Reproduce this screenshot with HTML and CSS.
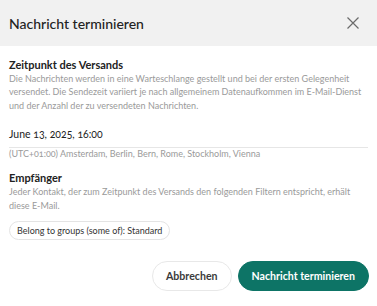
FILE: index.html
```html
<!DOCTYPE html>
<html lang="de">
<head>
    <meta charset="UTF-8">
    <meta name="viewport" content="width=device-width, initial-scale=1.0">
    <title>Nachricht terminieren</title>
    <link rel="stylesheet" href="styles.css">
</head>
<body>
    <div class="dialog">
        <div class="dialog-header">
            <h1>Nachricht terminieren</h1>
            <button class="close-btn" aria-label="Schließen">
                <svg width="12" height="12" viewBox="0 0 12 12">
                    <path d="M0.5 0.5 L11.5 11.5 M11.5 0.5 L0.5 11.5" stroke="#6b6b6b" stroke-width="1.2" fill="none"/>
                </svg>
            </button>
        </div>
        <div class="dialog-body">
            <div class="section">
                <h2>Zeitpunkt des Versands</h2>
                <p class="hint">Die Nachrichten werden in eine Warteschlange gestellt und bei der ersten Gelegenheit versendet. Die Sendezeit variiert je nach allgemeinem Datenaufkommen im E-Mail-Dienst und der Anzahl der zu versendeten Nachrichten.</p>
            </div>
            <div class="date-field">
                <div class="date-value">June 13, 2025, 16:00</div>
                <div class="timezone">(UTC+01:00) Amsterdam, Berlin, Bern, Rome, Stockholm, Vienna</div>
            </div>
            <div class="section">
                <h2>Empfänger</h2>
                <p class="hint">Jeder Kontakt, der zum Zeitpunkt des Versands den folgenden Filtern entspricht, erhält diese E-Mail.</p>
                <div class="chip-list">
                    <span class="chip">Belong to groups (some of): Standard</span>
                </div>
            </div>
        </div>
        <div class="dialog-footer">
            <button class="btn btn-secondary">Abbrechen</button>
            <button class="btn btn-primary">Nachricht terminieren</button>
        </div>
    </div>
</body>
</html>
```

FILE: styles.css
```css
body {
    margin: 0;
    font-family: "Lato", "Open Sans", sans-serif;
    color: #222;
    background: #fff;
}
.dialog {
    width: 377px;
}
.dialog-header {
    display: flex;
    align-items: center;
    justify-content: space-between;
    height: 46px;
    padding: 0 18px 0 9px;
    background-color: #f1f1f1;
}
.dialog-header h1 {
    margin: 0;
    font-size: 14px;
    font-weight: 500;
    color: #222;
}
.close-btn {
    border: 0;
    background: none;
    padding: 0;
    display: flex;
}
.dialog-body {
    padding: 10.5px 9px 0 9px;
}
.section h2 {
    margin: 0;
    font-size: 11px;
    line-height: 15px;
    font-weight: 700;
    color: #222;
}
.hint {
    margin: 0;
    font-size: 9px;
    line-height: 13.5px;
    color: #9a9a9a;
}
.date-field {
    margin-top: 14.5px;
    margin-bottom: 10.5px;
}
.date-value {
    font-size: 10.5px;
    line-height: 14px;
    padding-bottom: 6px;
    border-bottom: 1px solid #e6e6e6;
    font-variant-numeric: oldstyle-nums;
}
.timezone {
    font-size: 9px;
    line-height: 12px;
    color: #9a9a9a;
    font-variant-numeric: oldstyle-nums;
}
.chip-list {
    display: flex;
    margin-top: 8.5px;
}
.chip {
    padding: 3px 7px;
    border: 1px solid #e4e4e4;
    border-radius: 10px;
    font-size: 9px;
    line-height: 11px;
    color: #333;
}
.dialog-footer {
    display: flex;
    justify-content: flex-end;
    gap: 6px;
    padding: 21px 8px 0 9px;
}
.btn {
    height: 30px;
    border-radius: 15px;
    font-family: inherit;
    font-size: 10.6px;
    font-weight: 700;
    padding: 0 13px;
    cursor: pointer;
}
.btn-secondary {
    background: #fff;
    border: 1px solid #e8e8e8;
    color: #3a3a3a;
}
.btn-primary {
    background: #0d7466;
    border: 1px solid #0d7466;
    color: #fff;
}
```
